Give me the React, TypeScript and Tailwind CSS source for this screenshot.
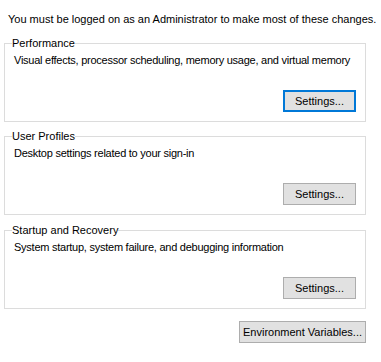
import React from "react";

function Group({ title, desc, focused }: { title: string; desc: string; focused?: boolean }) {
  return (
    <fieldset className="mx-[4px] w-[362px] border border-[#dcdcdc] pl-[8px] pr-[9px] pt-[4px] pb-[9px] min-w-0">
      <legend className="px-0 ml-[-1px] leading-[13px]">{title}</legend>
      <div className="leading-[13px] ml-[1px] whitespace-nowrap tracking-[-0.25px]">{desc}</div>
      <div className="flex justify-end mt-[23px]">
        {focused ? (
          <button className="w-[73px] h-[22px] bg-[#e1e1e1] border-2 border-[#0078d7] leading-[13px] text-black">
            Settings...
          </button>
        ) : (
          <button className="w-[73px] h-[22px] bg-[#e1e1e1] border border-[#adadad] leading-[13px] text-black">
            Settings...
          </button>
        )}
      </div>
    </fieldset>
  );
}

export default function App() {
  return (
    <div
      className="w-[381px] h-[362px] bg-white text-black text-[11px] overflow-hidden"
      style={{ fontFamily: '"Liberation Sans", Arial, sans-serif' }}
    >
      <div className="pt-[13px] pl-[8px] leading-[13px] whitespace-nowrap">
        You must be logged on as an Administrator to make most of these changes.
      </div>
      <div className="mt-[11px]">
        <Group
          title="Performance"
          desc="Visual effects, processor scheduling, memory usage, and virtual memory"
          focused
        />
      </div>
      <div className="mt-[8px]">
        <Group title="User Profiles" desc="Desktop settings related to your sign-in" />
      </div>
      <div className="mt-[9px]">
        <Group
          title="Startup and Recovery"
          desc="System startup, system failure, and debugging information"
        />
      </div>
      <div className="flex justify-end w-[366px] mt-[12px]">
        <button className="w-[127px] h-[22px] bg-[#e1e1e1] border border-[#adadad] leading-[13px] text-black">
          Environment Variables...
        </button>
      </div>
    </div>
  );
}
